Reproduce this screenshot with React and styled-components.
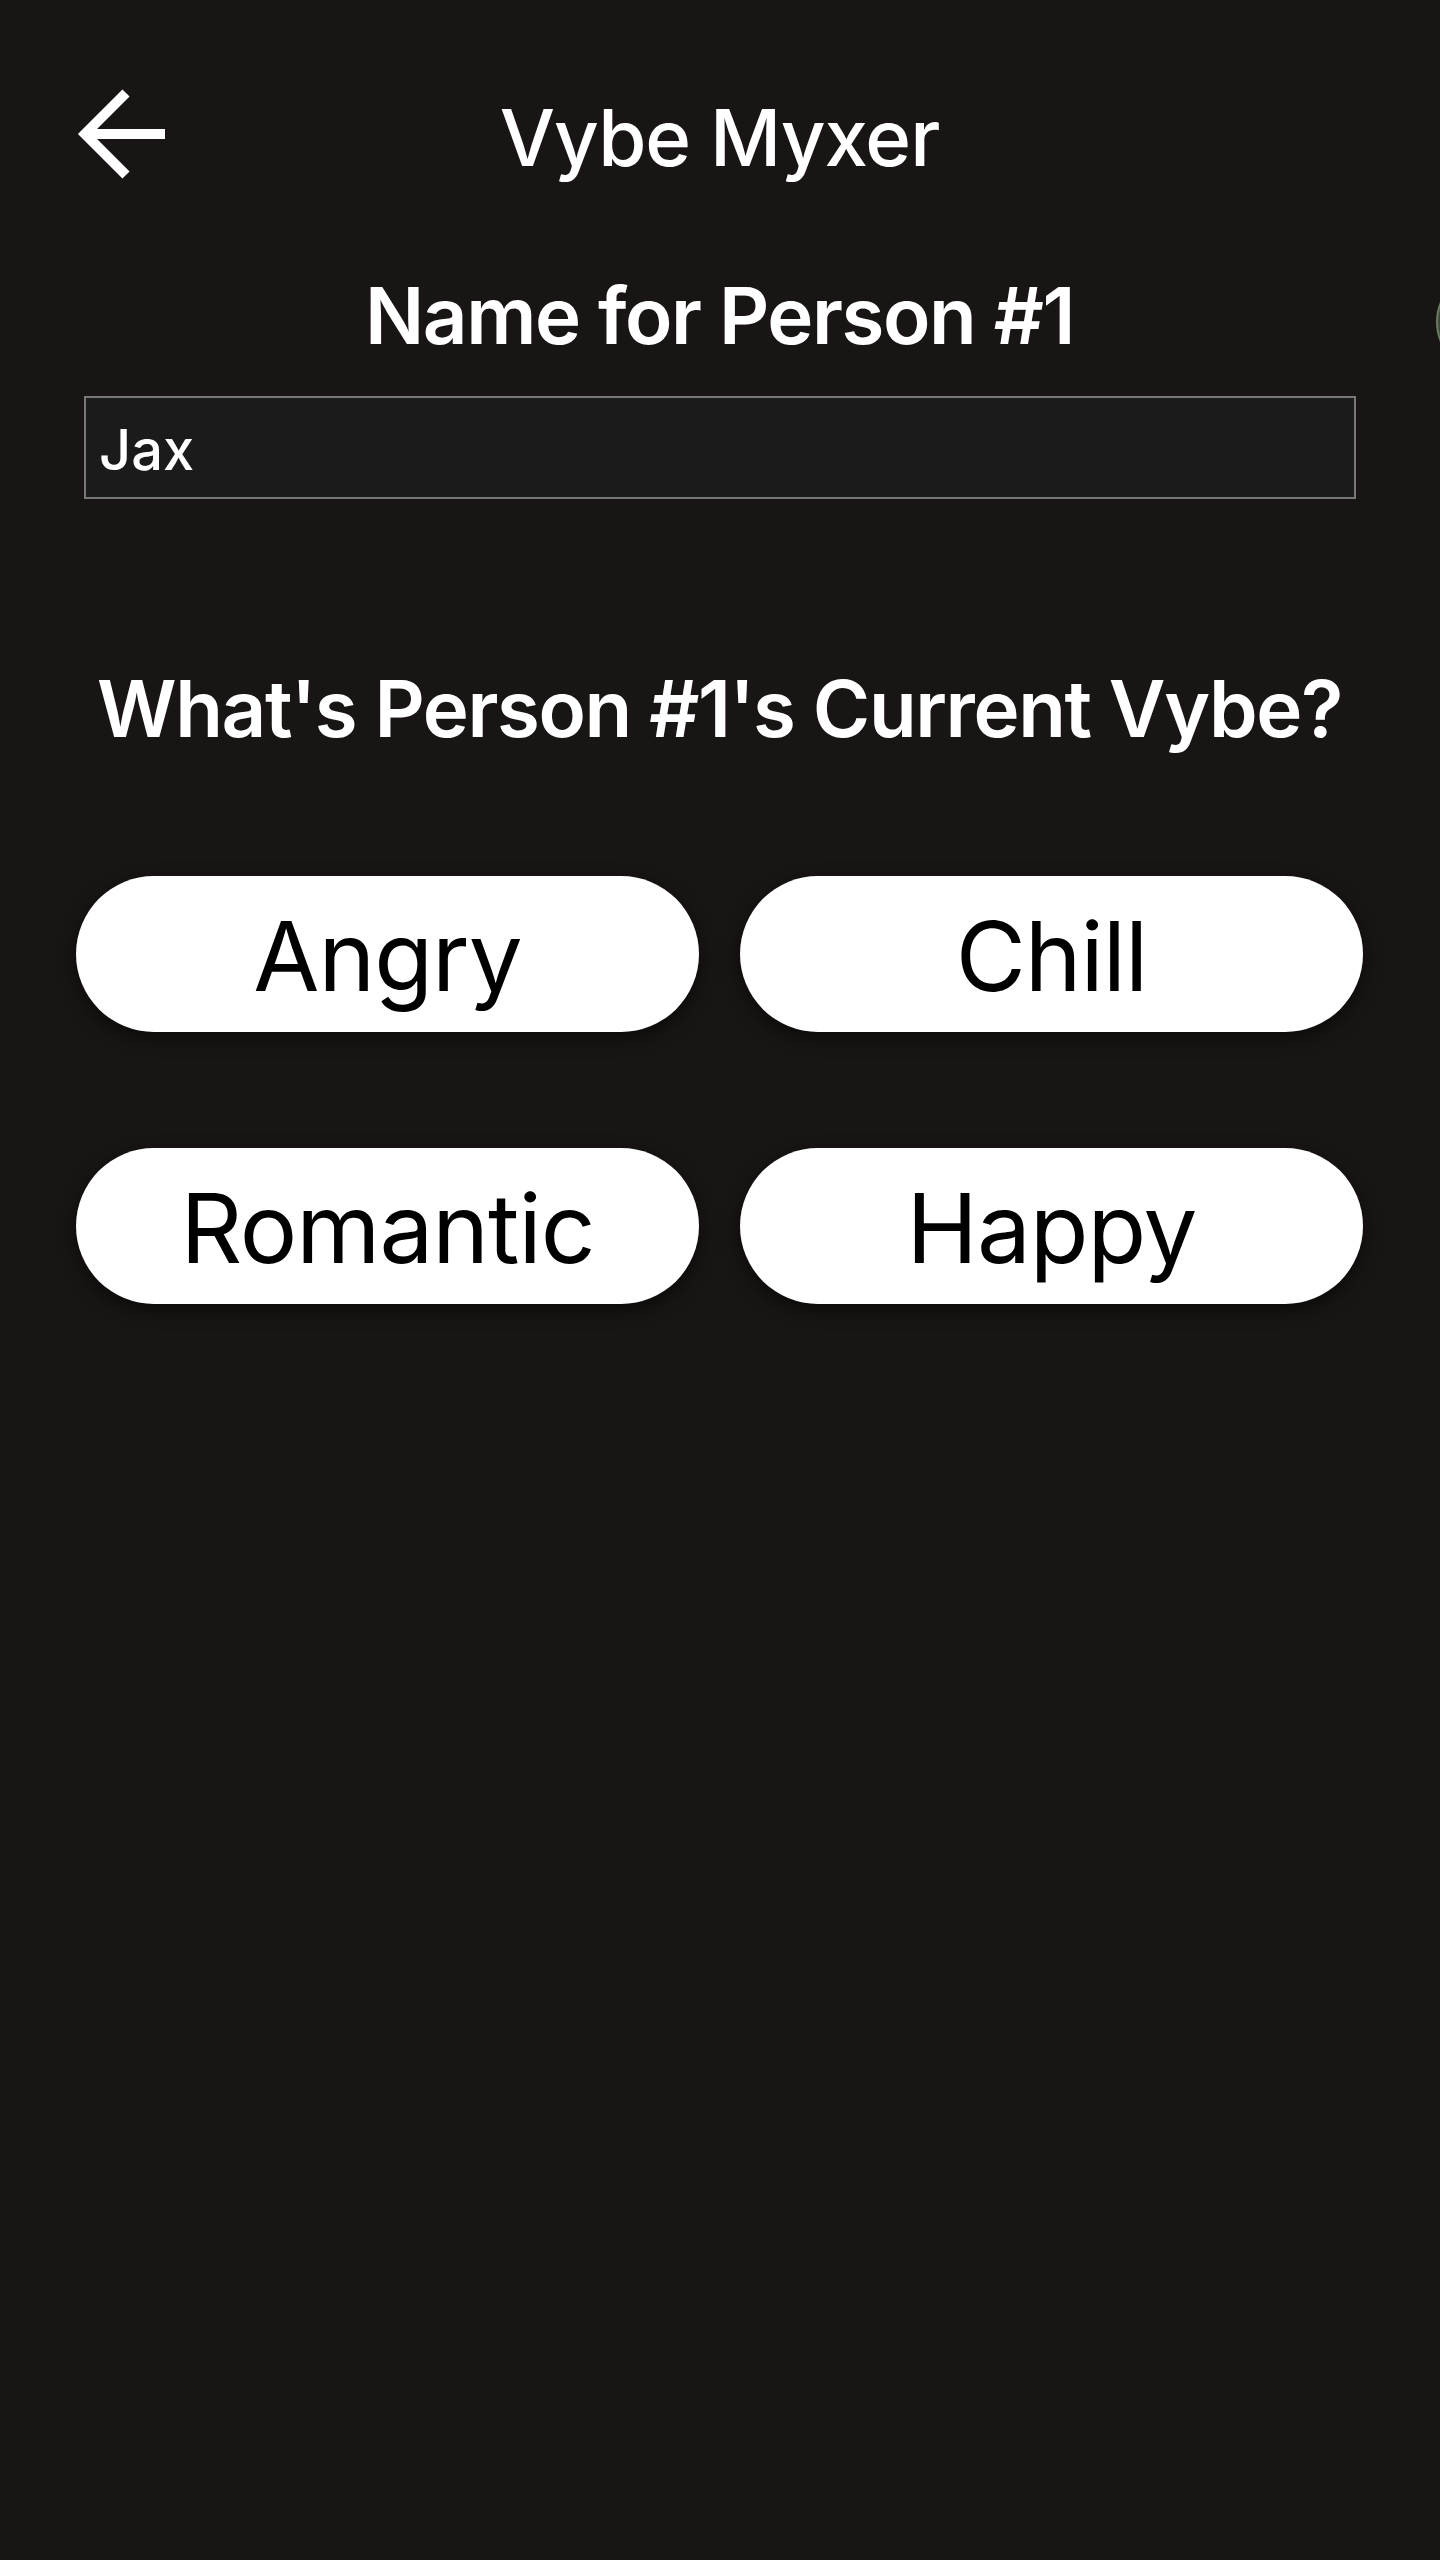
import React, { useState } from "react";
import styled, { createGlobalStyle } from "styled-components";

const GlobalStyle = createGlobalStyle`
  html, body {
    margin: 0;
    padding: 0;
    background: #191514;
    overflow-x: hidden;
  }
  body {
    font-family: Inter, "Noto Sans", sans-serif;
    color: #ffffff;
  }
`;

const Page = styled.div`
  position: relative;
  overflow: hidden;
  min-height: 2560px;
  padding: 97px 77px 0 76px;
  box-sizing: border-box;
  display: flex;
  flex-direction: column;
`;

const Header = styled.header`
  display: grid;
  grid-template-columns: 140px 1fr 140px;
  align-items: center;
  height: 78px;
`;

const BackButton = styled.button`
  background: none;
  border: none;
  padding: 0;
  width: 90px;
  height: 90px;
  margin-top: -8px;
  cursor: pointer;
  display: flex;
`;

const Title = styled.h1`
  margin: 0;
  text-align: center;
  font-size: 78px;
  line-height: 78px;
  font-weight: 500;
  letter-spacing: -1px;
  white-space: nowrap;
`;

const Heading = styled.h2`
  margin: ${(p) => p.$top}px 0 0;
  text-align: center;
  font-size: 78px;
  line-height: 78px;
  font-weight: 600;
  letter-spacing: -1.4px;
  white-space: nowrap;
`;

const NameInput = styled.input`
  margin: 41px 7px 0 8px;
  height: 103px;
  box-sizing: border-box;
  background: #1b1b1b;
  border: 2px solid #777777;
  border-radius: 0;
  color: #ffffff;
  font-family: Inter, "Noto Sans", sans-serif;
  font-size: 56px;
  font-weight: 500;
  padding: 4px 13px 0;
  outline: none;
`;

const VybeGrid = styled.div`
  margin-top: 128px;
  display: grid;
  grid-template-columns: 623px 623px;
  column-gap: 41px;
  row-gap: 116px;
`;

const VybeButton = styled.button`
  height: 156px;
  border: none;
  border-radius: 78px;
  background: ${(p) => (p.$active ? "#e6e6e6" : "#ffffff")};
  color: #000000;
  font-family: Inter, "Noto Sans", sans-serif;
  font-size: 96px;
  font-weight: 400;
  letter-spacing: -1px;
  padding: 4px 0 0;
  box-shadow: 0 6px 18px rgba(0, 0, 0, 0.55);
  cursor: pointer;
`;

const EdgeDot = styled.div`
  position: absolute;
  left: 1436px;
  top: 272px;
  width: 96px;
  height: 96px;
  border-radius: 50%;
  background: #3f4b39;
  border: 2px solid #6b7a62;
`;

function BackArrow() {
  return (
    <svg width="90" height="90" viewBox="0 0 90 90" fill="none">
      <path d="M89 45H10" stroke="#fff" strokeWidth="10" />
      <path d="M50 4L9 45L50 86" stroke="#fff" strokeWidth="10" />
    </svg>
  );
}

const vybes = ["Angry", "Chill", "Romantic", "Happy"];

export default function App() {
  const [name, setName] = useState("Jax");
  const [vybe, setVybe] = useState(null);

  return (
    <>
      <GlobalStyle />
      <Page>
        <Header>
          <BackButton aria-label="Back">
            <BackArrow />
          </BackButton>
          <Title>Vybe Myxer</Title>
          <span />
        </Header>

        <Heading $top={102}>Name for Person #1</Heading>
        <NameInput value={name} onChange={(e) => setName(e.target.value)} />

        <Heading $top={171}>What's Person #1's Current Vybe?</Heading>

        <VybeGrid>
          {vybes.map((v) => (
            <VybeButton key={v} $active={vybe === v} onClick={() => setVybe(v)}>
              {v}
            </VybeButton>
          ))}
        </VybeGrid>

        <EdgeDot />
      </Page>
    </>
  );
}
